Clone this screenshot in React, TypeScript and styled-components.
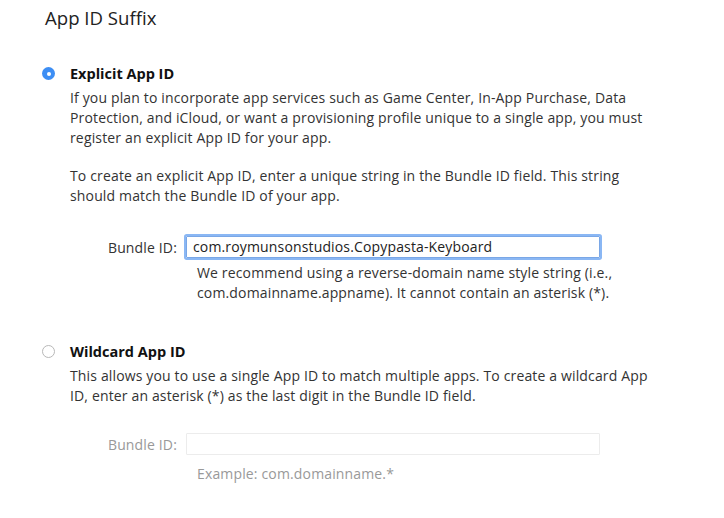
import React from "react";
import styled, { createGlobalStyle } from "styled-components";

const Global = createGlobalStyle`
  html, body { margin: 0; padding: 0; background: #fff; }
  body { font-family: "Open Sans", "Noto Sans", sans-serif; color: #333; }
`;

const Page = styled.div`
  width: 724px;
  height: 518px;
  overflow: hidden;
  padding: 6px 0 0 45px;
  box-sizing: border-box;
`;

const Title = styled.h2`
  margin: 0;
  font-size: 18.6px;
  font-weight: 400;
  color: #222;
  line-height: 24px;
`;

const Option = styled.div<{ $top: number }>`
  display: flex;
  gap: 15px;
  margin: ${(p) => p.$top}px 0 0 -3px;
`;

const Radio = styled.span<{ $checked?: boolean }>`
  flex: none;
  width: 13px;
  height: 13px;
  margin-top: 4px;
  border-radius: 50%;
  box-sizing: border-box;
  display: flex;
  align-items: center;
  justify-content: center;
  background: ${(p) => (p.$checked ? "#3d8ef4" : "#fff")};
  border: ${(p) => (p.$checked ? "none" : "1px solid #b8b8b8")};
  &::after {
    content: "";
    display: ${(p) => (p.$checked ? "block" : "none")};
    width: 4px;
    height: 4px;
    border-radius: 50%;
    background: #fff;
  }
`;

const Body = styled.div`
  flex: 1;
`;

const Heading = styled.div`
  font-size: 14.5px;
  font-weight: 700;
  color: #111;
  line-height: 20px;
  margin-top: 1px;
`;

const Para = styled.p`
  margin: 4px 0 0;
  font-size: 14px;
  letter-spacing: 0.15px;
  line-height: 20px;
  color: #333;
  white-space: nowrap;
  & + & { margin-top: 18px; }
`;

const FieldRow = styled.div<{ $top: number }>`
  display: flex;
  align-items: center;
  margin-top: ${(p) => p.$top}px;
`;

const Label = styled.label<{ $muted?: boolean }>`
  width: 107px;
  text-align: right;
  font-size: 14px;
  letter-spacing: 0.15px;
  color: ${(p) => (p.$muted ? "#999" : "#333")};
  padding-right: 9px;
  box-sizing: content-box;
`;

const Input = styled.div<{ $focus?: boolean }>`
  width: 414px;
  height: 22px;
  box-sizing: border-box;
  border: 1px solid ${(p) => (p.$focus ? "#7aa7e6" : "#ececec")};
  box-shadow: ${(p) => (p.$focus ? "0 0 0 2px #8ab7f4" : "none")};
  border-radius: 1px;
  font-size: 14px;
  letter-spacing: 0.15px;
  line-height: 20px;
  padding-left: 6px;
  color: #222;
`;

const Help = styled.p<{ $muted?: boolean }>`
  margin: ${(p) => (p.$muted ? 9 : 5)}px 0 0 127px;
  font-size: 14px;
  letter-spacing: 0.15px;
  line-height: 20px;
  color: ${(p) => (p.$muted ? "#999" : "#333")};
`;

export default function App() {
  return (
    <>
      <Global />
      <Page>
        <Title>App ID Suffix</Title>
        <Option $top={33}>
          <Radio $checked />
          <Body>
            <Heading>Explicit App ID</Heading>
            <Para>
              If you plan to incorporate app services such as Game Center, In-App Purchase, Data
              <br />
              Protection, and iCloud, or want a provisioning profile unique to a single app, you must
              <br />
              register an explicit App ID for your app.
            </Para>
            <Para>
              To create an explicit App ID, enter a unique string in the Bundle ID field. This string
              <br />
              should match the Bundle ID of your app.
            </Para>
            <FieldRow $top={30}>
              <Label>Bundle ID:</Label>
              <Input $focus>com.roymunsonstudios.Copypasta-Keyboard</Input>
            </FieldRow>
            <Help>
              We recommend using a reverse-domain name style string (i.e.,
              <br />
              com.domainname.appname). It cannot contain an asterisk (*).
            </Help>
          </Body>
        </Option>
        <Option $top={38}>
          <Radio />
          <Body>
            <Heading>Wildcard App ID</Heading>
            <Para>
              This allows you to use a single App ID to match multiple apps. To create a wildcard App
              <br />
              ID, enter an asterisk (*) as the last digit in the Bundle ID field.
            </Para>
            <FieldRow $top={27}>
              <Label $muted>Bundle ID:</Label>
              <Input />
            </FieldRow>
            <Help $muted>Example: com.domainname.*</Help>
          </Body>
        </Option>
      </Page>
    </>
  );
}
